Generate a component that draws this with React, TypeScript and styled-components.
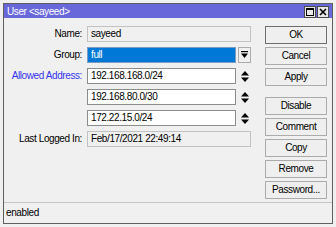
import { Fragment } from 'react';
import styled, { createGlobalStyle } from 'styled-components';

const GlobalStyle = createGlobalStyle`
  html, body {
    margin: 0;
    padding: 0;
    background: #f0f0f0;
  }
  body {
    font-family: "Liberation Sans", Arial, sans-serif;
    font-size: 10px;
    letter-spacing: -0.4px;
    color: #000;
  }
`;

const Window = styled.div`
  margin: 3px 3px 0 3px;
  width: 328px;
  height: 219px;
  border: 1px solid #5f5f5f;
  background: #f0f0f0;
  display: flex;
  flex-direction: column;
`;

const TitleBar = styled.div`
  height: 14px;
  background: #6868da;
  color: #fff;
  display: flex;
  align-items: center;
  justify-content: space-between;
  padding: 0 3px 0 3px;
`;

const Title = styled.span`
  font-size: 10px;
`;

const TitleButtons = styled.div`
  display: flex;
  gap: 1px;
  margin-top: 1px;
`;

const TitleBtn = styled.div`
  width: 10px;
  height: 10px;
  background: #e8e8e8;
  border: 1px solid #4a4a4a;
  display: flex;
  align-items: center;
  justify-content: center;
`;

const Body = styled.div`
  flex: 1;
  display: flex;
  padding: 8px 5px 0 0;
`;

const Form = styled.div`
  width: 247px;
  display: grid;
  grid-template-columns: 78px 1fr;
  grid-auto-rows: 16px;
  column-gap: 5px;
  row-gap: 5px;
  align-content: start;
`;

const Label = styled.div<{ $blue?: boolean }>`
  text-align: right;
  line-height: 16px;
  color: ${(p) => (p.$blue ? '#3535ee' : '#000')};
`;

const FieldRow = styled.div`
  display: flex;
  align-items: center;
  gap: 2px;
`;

const Field = styled.div<{ $kind: 'readonly' | 'edit' | 'selected' }>`
  box-sizing: border-box;
  height: 16px;
  line-height: 14px;
  padding-left: 3px;
  white-space: nowrap;
  overflow: hidden;
  flex: 1;
  background: ${(p) =>
    p.$kind === 'readonly' ? '#f0f0f0' : p.$kind === 'selected' ? '#0078d7' : '#fff'};
  color: ${(p) => (p.$kind === 'selected' ? '#fff' : '#000')};
  border: 1px solid
    ${(p) => (p.$kind === 'readonly' ? '#c2c2c2' : p.$kind === 'selected' ? '#7a9cc0' : '#8c8c8c')};
`;

const DropBtn = styled.div`
  box-sizing: border-box;
  width: 13px;
  height: 16px;
  border: 1px solid #acacac;
  background: #f0f0f0;
  display: flex;
  align-items: center;
  justify-content: center;
`;

const Spinner = styled.div`
  width: 13px;
  height: 16px;
  display: flex;
  align-items: center;
  justify-content: center;
`;

const Buttons = styled.div`
  margin-left: auto;
  width: 62px;
  display: flex;
  flex-direction: column;
  gap: 3px;
`;

const Button = styled.div<{ $default?: boolean; $spaced?: boolean }>`
  box-sizing: border-box;
  height: 18px;
  line-height: 16px;
  text-align: center;
  background: #efefef;
  border: 1px solid ${(p) => (p.$default ? '#6e6e6e' : '#ababab')};
  margin-top: ${(p) => (p.$spaced ? '8px' : '0')};
`;

const StatusBar = styled.div`
  height: 19px;
  border-top: 1px solid #c6c6c6;
  display: flex;
  align-items: center;
  padding-left: 2px;
  margin-bottom: 1px;
`;

function DropIcon() {
  return (
    <svg width="7" height="8" viewBox="0 0 7 8">
      <rect x="0" y="0" width="7" height="1.2" fill="#000" />
      <path d="M0 2.5 H7 L3.5 7 Z" fill="#000" />
    </svg>
  );
}

function UpDownIcon() {
  return (
    <svg width="8" height="11" viewBox="0 0 8 11">
      <path d="M0 4.5 L4 0 L8 4.5 Z" fill="#000" />
      <path d="M0 6.5 H8 L4 11 Z" fill="#000" />
    </svg>
  );
}

const addresses = ['192.168.168.0/24', '192.168.80.0/30', '172.22.15.0/24'];

export default function App() {
  return (
    <>
      <GlobalStyle />
      <Window>
        <TitleBar>
          <Title>User &lt;sayeed&gt;</Title>
          <TitleButtons>
            <TitleBtn>
              <svg width="8" height="8" viewBox="0 0 8 8">
                <rect x="0.5" y="0.5" width="7" height="7" fill="none" stroke="#000" />
                <rect x="0.5" y="0.5" width="7" height="1.5" fill="#000" />
              </svg>
            </TitleBtn>
            <TitleBtn>
              <svg width="8" height="8" viewBox="0 0 8 8">
                <path d="M1 1 L7 7 M7 1 L1 7" stroke="#000" strokeWidth="1.6" />
              </svg>
            </TitleBtn>
          </TitleButtons>
        </TitleBar>
        <Body>
          <Form>
            <Label>Name:</Label>
            <FieldRow>
              <Field $kind="readonly">sayeed</Field>
            </FieldRow>
            <Label>Group:</Label>
            <FieldRow>
              <Field $kind="selected">full</Field>
              <DropBtn>
                <DropIcon />
              </DropBtn>
            </FieldRow>
            {addresses.map((a, i) => (
              <Fragment key={a}>
                <Label $blue={i === 0}>{i === 0 ? 'Allowed Address:' : ''}</Label>
                <FieldRow>
                  <Field $kind="edit">{a}</Field>
                  <Spinner>
                    <UpDownIcon />
                  </Spinner>
                </FieldRow>
              </Fragment>
            ))}
            <Label>Last Logged In:</Label>
            <FieldRow>
              <Field $kind="readonly">Feb/17/2021 22:49:14</Field>
            </FieldRow>
          </Form>
          <Buttons>
            <Button $default>OK</Button>
            <Button>Cancel</Button>
            <Button>Apply</Button>
            <Button $spaced>Disable</Button>
            <Button>Comment</Button>
            <Button>Copy</Button>
            <Button>Remove</Button>
            <Button>Password...</Button>
          </Buttons>
        </Body>
        <StatusBar>enabled</StatusBar>
      </Window>
    </>
  );
}
